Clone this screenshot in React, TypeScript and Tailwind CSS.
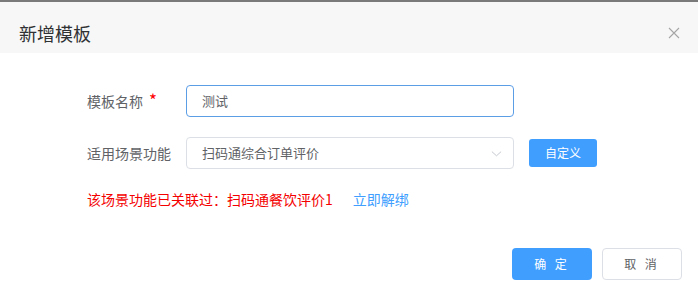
const App = () => {
  return (
    <div
      className="w-[698px] h-[295px] bg-white border-t-2 border-[#7a7a7a] overflow-hidden"
      style={{ fontFamily: '"Noto Sans CJK SC", "Noto Sans", sans-serif' }}
    >
      <div className="h-[51px] bg-[#f7f7f7] flex justify-between px-[19px] pt-[19px]">
        <h2 className="text-[18px] leading-[24px] text-[#303133]">新增模板</h2>
        <button className="w-[12px] h-[12px] mt-[6px] mr-[-1px] text-[#a6a6a6]">
          <svg viewBox="0 0 12 12" className="w-[12px] h-[12px]" fill="none" stroke="currentColor" strokeWidth="1.1">
            <path d="M1 1L11 11M11 1L1 11" />
          </svg>
        </button>
      </div>

      <div className="px-[87px] pt-[32px]">
        <div className="flex items-center h-[32px]">
          <label className="w-[99px] text-[14px] text-[#606266] flex items-center">
            模板名称
            <span className="text-[#f00] ml-[6px] text-[17px] leading-none -mt-[4px]">*</span>
          </label>
          <div className="w-[328px] h-[32px] border border-[#5b9ee6] rounded-[4px] flex items-center px-[15px] text-[13px] text-[#606266]">
            测试
          </div>
        </div>

        <div className="flex items-center h-[32px] mt-[20px]">
          <label className="w-[99px] text-[14px] text-[#606266]">适用场景功能</label>
          <div className="w-[328px] h-[32px] border border-[#dcdfe6] rounded-[4px] flex items-center justify-between pl-[15px] pr-[11px] text-[13px] text-[#606266]">
            <span>扫码通综合订单评价</span>
            <svg viewBox="0 0 12 12" className="w-[11px] h-[11px] text-[#c0c4cc]" fill="none" stroke="currentColor" strokeWidth="1">
              <path d="M1 4L6 8.5L11 4" />
            </svg>
          </div>
          <button className="ml-[15px] w-[68px] h-[28px] bg-[#409eff] rounded-[3px] text-white text-[12px]">
            自定义
          </button>
        </div>

        <div className="mt-[20px] flex items-center h-[20px] text-[14px]">
          <span className="text-[#f40000]">该场景功能已关联过：扫码通餐饮评价1</span>
          <span className="ml-[20px] text-[#409eff]">立即解绑</span>
        </div>
      </div>

      <div className="flex justify-end gap-[10px] pr-[16px] mt-[39px]">
        <button className="w-[80px] h-[32px] bg-[#409eff] rounded-[4px] text-white text-[12px] tracking-[3px]">
          确 定
        </button>
        <button className="w-[80px] h-[32px] bg-white border border-[#dcdfe6] rounded-[4px] text-[#606266] text-[12px] tracking-[3px]">
          取 消
        </button>
      </div>
    </div>
  );
};

export default App;
